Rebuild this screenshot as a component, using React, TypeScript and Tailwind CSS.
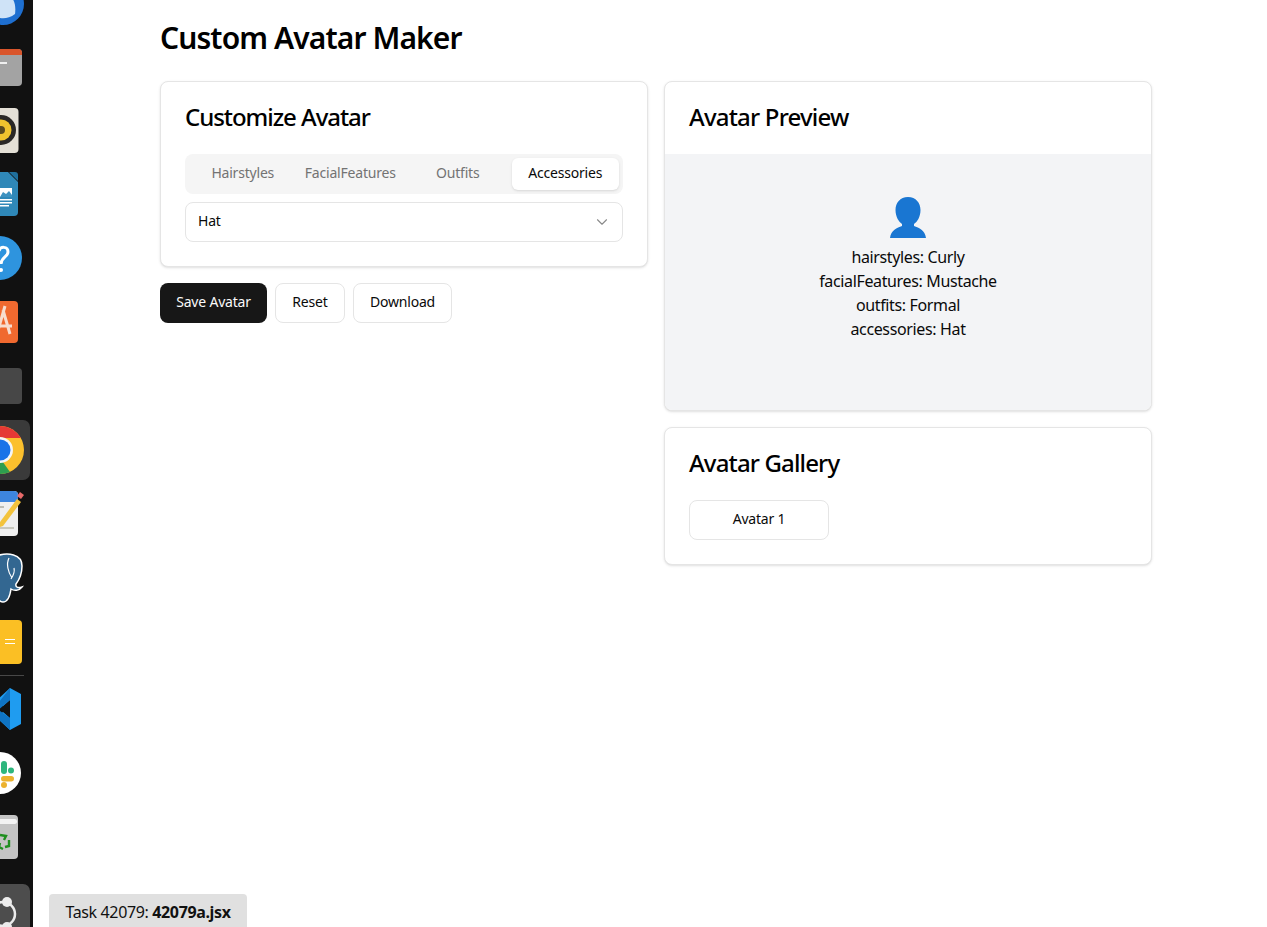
const tabs = ['Hairstyles', 'FacialFeatures', 'Outfits', 'Accessories'];
const summary = ['hairstyles: Curly', 'facialFeatures: Mustache', 'outfits: Formal', 'accessories: Hat'];

function DockIcon({ children }: { children: React.ReactNode }) {
  return (
    <svg width="33" height="64" viewBox="0 0 33 64" className="shrink-0">
      {children}
    </svg>
  );
}

function Dock() {
  return (
    <aside className="flex h-[927px] w-[33px] shrink-0 flex-col overflow-hidden bg-[#111111]">
      <div className="-mt-[30px] flex flex-col">
        {/* mail */}
        <DockIcon>
          <circle cx="3" cy="34" r="21" fill="#1e6fd0" />
          <path d="M0 24 C10 22 17 30 15 44 C10 48 4 49 0 48 Z" fill="#cfe3f7" />
        </DockIcon>
        {/* files */}
        <DockIcon>
          <rect x="-12" y="15" width="34" height="37" rx="4" fill="#a3a3a3" />
          <path d="M-12 19 a4 4 0 0 1 4-4 H18 a4 4 0 0 1 4 4 v2 H-12 Z" fill="#d9552b" />
          <rect x="0" y="28" width="7" height="2" fill="#efefef" />
        </DockIcon>
        {/* rhythmbox */}
        <DockIcon>
          <rect x="-12" y="10" width="30.5" height="45" rx="4" fill="#e4e0d6" />
          <circle cx="1" cy="32" r="15" fill="#2a2826" />
          <circle cx="1" cy="32" r="10.5" fill="#f0c32e" />
          <circle cx="1" cy="32" r="4" fill="#5a4a20" />
        </DockIcon>
        {/* writer / draw */}
        <DockIcon>
          <path d="M-12 10 H8 L18 20 V50 a4 4 0 0 1-4 4 H-12 Z" fill="#2f88b8" />
          <path d="M9 10 H15 a3 3 0 0 1 3 3 V19 Z" fill="#1f6f9c" />
          <rect x="0" y="26" width="12" height="9" fill="#ffffff" />
          <path d="M0 35 L3 30 L6 32 L9 29 L12 33 V35 Z" fill="#3d92c0" />
          <rect x="0" y="37" width="12" height="1.5" fill="#ffffff" />
          <rect x="0" y="40" width="12" height="1.5" fill="#ffffff" />
          <rect x="0" y="43" width="9" height="1.5" fill="#ffffff" />
        </DockIcon>
        {/* help */}
        <DockIcon>
          <circle cx="0" cy="32" r="22" fill="#2e94de" />
          <path d="M-1 25 C0 20 8 20 8 26 C8 31 1 31 1 38" fill="none" stroke="#ffffff" strokeWidth="3" />
          <circle cx="1" cy="44" r="2" fill="#ffffff" />
        </DockIcon>
        {/* software */}
        <DockIcon>
          <rect x="-12" y="11" width="30" height="42" rx="4" fill="#f0692f" />
          <path d="M5 16 L-3 44 M3 20 L10 44 M-4 36 H12" fill="none" stroke="#f7ddcf" strokeWidth="3" />
        </DockIcon>
        {/* blank tile */}
        <DockIcon>
          <rect x="-12" y="14" width="34" height="36" rx="4" fill="#474747" />
        </DockIcon>
        {/* chrome */}
        <DockIcon>
          <rect x="-12" y="2" width="42" height="60" rx="7" fill="#3a3a3a" />
          <circle cx="0" cy="32" r="24" fill="#fbc02d" />
          <path d="M0 8 A24 24 0 0 1 21 20 H0 Z" fill="#e53935" />
          <path d="M0 56 A24 24 0 0 0 10 54 L0 40 Z" fill="#2e9e4f" />
          <circle cx="0" cy="32" r="13" fill="#f5f5f5" />
          <circle cx="0" cy="32" r="10.5" fill="#1a73e8" />
        </DockIcon>
        {/* notes + pencil */}
        <DockIcon>
          <rect x="-12" y="9" width="30" height="45" rx="4" fill="#efefef" />
          <path d="M-12 13 a4 4 0 0 1 4-4 H14 a4 4 0 0 1 4 4 v7 H-12 Z" fill="#3d85de" />
          <rect x="0" y="24" width="4" height="2" fill="#bdbdb5" />
          <rect x="0" y="45" width="14" height="2" fill="#c8c8be" />
          <path d="M0 40 L17 17 L21 20 L3 44 L0 45 Z" fill="#f3c33c" />
          <path d="M17 14 L20 10 L24 13 L21 17 Z" fill="#e86a6a" />
        </DockIcon>
        {/* postgres */}
        <DockIcon>
          <path d="M-4 10 C8 6 22 8 22 20 C22 28 19 34 16 38 C15 42 19 42 22 41 C19 45 14 45 11 43 C10 50 8 56 3 56 C-2 56 -3 50 -3 44 Z" fill="#336791" stroke="#ffffff" strokeWidth="1.5" />
          <path d="M9 12 C6 18 8 26 12 32 M14 22 C15 26 13 30 11 33" fill="none" stroke="#ffffff" strokeWidth="1.2" />
        </DockIcon>
        {/* sticky notes */}
        <DockIcon>
          <rect x="-12" y="10" width="34" height="44" rx="4" fill="#fbbf24" />
          <rect x="5" y="29" width="10" height="1" fill="#ffffff" />
          <rect x="5" y="33" width="10" height="1" fill="#ffffff" />
        </DockIcon>
        <div className="mt-[1px] mb-[1px] h-[1px] w-[24px] bg-[#484848]" />
        {/* vs code */}
        <DockIcon>
          <path d="M10 11 L21 17 V47 L10 53 L-4 40 L3 35 L10 41 V23 L3 29 L-4 24 Z" fill="#1f9cf0" />
          <path d="M10 11 V23 L-4 35 V29 Z M10 53 V41 L0 34 L-4 40 Z" fill="#0f74c4" />
        </DockIcon>
        {/* slack */}
        <DockIcon>
          <circle cx="0" cy="32" r="21" fill="#ffffff" />
          <rect x="1" y="20" width="6" height="13" rx="3" fill="#2eb67d" />
          <circle cx="11" cy="29.5" r="3" fill="#2eb67d" />
          <rect x="1" y="35" width="13" height="5.5" rx="2.75" fill="#ecb22e" />
          <circle cx="4" cy="44" r="3" fill="#ecb22e" />
          <rect x="-6" y="20" width="5" height="13" rx="2.5" fill="#36c5f0" />
        </DockIcon>
        {/* trash */}
        <DockIcon>
          <rect x="-12" y="10" width="30" height="44" rx="4" fill="#c4c4c4" />
          <path d="M-12 14 H14 a2 2 0 0 1 1 5 H-12 Z" fill="#f3f3f3" />
          <path d="M0 30 L6 31 L4 35 M9 35 L9 41 L5 42 M3 44 L-1 42 L0 38" fill="none" stroke="#1f8f1f" strokeWidth="2.4" />
        </DockIcon>
        {/* show apps */}
        <DockIcon>
          <rect x="-12" y="15" width="42" height="60" rx="7" fill="#4d4d4d" />
          <circle cx="3" cy="45" r="12" fill="none" stroke="#ececec" strokeWidth="2.5" />
          <circle cx="7" cy="33" r="5" fill="#ececec" />
          <circle cx="7" cy="58" r="5" fill="#ececec" />
        </DockIcon>
      </div>
    </aside>
  );
}

export default function App() {
  return (
    <div className="relative flex h-[927px] overflow-hidden bg-white font-['Noto_Sans',sans-serif] text-[#0a0a0a]">
      <Dock />
      <main className="ml-[127px] w-[992px] pt-[20px]">
        <h1 className="mb-[25px] text-3xl font-semibold tracking-[-0.9px] text-black">Custom Avatar Maker</h1>
        <div className="grid grid-cols-2 items-start gap-4">
          <div className="flex flex-col gap-4">
            <section className="rounded-lg border border-[#e5e5e5] bg-white p-6 shadow-sm">
              <h2 className="mb-[26px] text-2xl leading-[22px] font-medium tracking-[-1.05px] text-black">Customize Avatar</h2>
              <div className="flex h-10 items-center rounded-lg bg-[#f5f5f5] p-1">
                {tabs.map((tab) => (
                  <button
                    key={tab}
                    className={`flex h-8 flex-1 items-center justify-center rounded-md pb-[2px] text-sm tracking-[-0.2px] ${
                      tab === 'Accessories' ? 'bg-white text-[#0a0a0a] shadow-sm' : 'text-[#737373]'
                    }`}
                  >
                    {tab}
                  </button>
                ))}
              </div>
              <div className="mt-2 flex h-10 items-center justify-between rounded-lg border border-[#e5e5e5] bg-white pr-[11px] pl-3 text-sm tracking-[-0.2px]">
                <span className="pb-[2px]">Hat</span>
                <svg width="18" height="18" viewBox="0 0 24 24" fill="none" stroke="#8a8a8a" strokeWidth="1.5" strokeLinecap="round" strokeLinejoin="round">
                  <path d="m6 9 6 6 6-6" />
                </svg>
              </div>
            </section>
            <div className="flex gap-2 text-sm tracking-[-0.2px]">
              <button className="h-10 w-[107px] rounded-lg bg-[#171717] pb-[2px] text-[#fafafa]">Save Avatar</button>
              <button className="h-10 w-[70px] rounded-lg border border-[#e5e5e5] bg-white pb-[2px]">Reset</button>
              <button className="h-10 w-[99px] rounded-lg border border-[#e5e5e5] bg-white pb-[2px]">Download</button>
            </div>
          </div>
          <div className="flex flex-col gap-4">
            <section className="overflow-hidden rounded-lg border border-[#e5e5e5] bg-white shadow-sm">
              <h2 className="px-6 pt-6 pb-[26px] text-2xl leading-[22px] font-medium tracking-[-0.8px] text-black">Avatar Preview</h2>
              <div className="flex h-[256px] flex-col items-center bg-[#f3f4f6] pt-[43px] text-center">
                <svg width="36" height="41" viewBox="0 0 36 41" className="mb-[7px]">
                  <path d="M18 0 C26 0 30.5 6 30.5 13 C30.5 20 27 25 24 27 V29 C29 31 35 33 36 41 H0 C1 33 7 31 12 29 V27 C9 25 5.5 20 5.5 13 C5.5 6 10 0 18 0 Z" fill="#1976d2" />
                </svg>
                {summary.map((line) => (
                  <p key={line} className="text-base leading-6 tracking-[-0.36px]">{line}</p>
                ))}
              </div>
            </section>
            <section className="rounded-lg border border-[#e5e5e5] bg-white p-6 shadow-sm">
              <h2 className="mb-[26px] text-2xl leading-[22px] font-medium tracking-[-0.85px] text-black">Avatar Gallery</h2>
              <button className="h-10 w-[140px] rounded-lg border border-[#e5e5e5] bg-white pb-[2px] text-sm tracking-[-0.2px]">Avatar 1</button>
            </section>
          </div>
        </div>
      </main>
      <div className="absolute bottom-0 left-[49px] flex h-[33px] w-[198px] items-center justify-center rounded-t bg-[#e0e0e0] pt-[3px] text-base tracking-[-0.36px] text-[#111111]">
        <span>Task 42079: <strong>42079a.jsx</strong></span>
      </div>
    </div>
  );
}
